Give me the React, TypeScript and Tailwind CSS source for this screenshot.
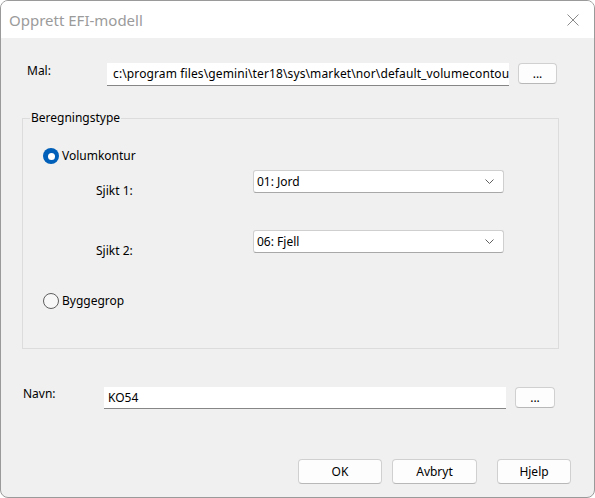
import React from 'react'

const font = { fontFamily: '"Segoe UI", "Noto Sans", sans-serif' }

function Radio({ checked, label }: { checked?: boolean; label: string }) {
  return (
    <div className="flex items-center h-[16px]">
      {checked ? (
        <div className="w-[16px] h-[16px] rounded-full bg-[#005fb8] flex items-center justify-center">
          <div className="w-[7px] h-[7px] rounded-full bg-white" />
        </div>
      ) : (
        <div className="w-[16px] h-[16px] rounded-full border border-[#5e5e5e] bg-[#f7f7f7]" />
      )}
      <span className="ml-[3px] leading-[16px]">{label}</span>
    </div>
  )
}

function Combo({ value }: { value: string }) {
  return (
    <div className="w-[251px] h-[23px] bg-white border border-[#cfcfcf] border-b-[#a8a8a8] rounded-[3px] flex items-center justify-between pl-[3px] pr-[9px]">
      <span className="leading-[16px]">{value}</span>
      <svg width="9" height="5" viewBox="0 0 9 5" className="text-[#606060]">
        <polyline points="0.5,0.5 4.5,4.5 8.5,0.5" fill="none" stroke="currentColor" strokeWidth="1" />
      </svg>
    </div>
  )
}

function Btn({ children, w }: { children: React.ReactNode; w: string }) {
  return (
    <button className={`${w} h-[25px] bg-[#fdfdfd] border border-[#d0d0d0] border-b-[#b8b8b8] rounded-[4px] text-black leading-[16px]`}>
      {children}
    </button>
  )
}

export default function App() {
  return (
    <div className="w-[595px] h-[498px] bg-white" style={font}>
      <div className="w-[595px] h-[498px] border border-[#9a9a9a] rounded-[8px] overflow-hidden bg-[#f0f0f0] flex flex-col text-[12px] text-black">
        {/* Title bar */}
        <div className="h-[37px] bg-white flex items-center justify-between pl-[8px] pr-[15px] shrink-0">
          <span className="text-[15px] text-[#9b9b9b] leading-[20px] mt-[1px]">Opprett EFI-modell</span>
          <svg width="12" height="12" viewBox="0 0 12 12">
            <path d="M0.5 0.5 L11.5 11.5 M11.5 0.5 L0.5 11.5" stroke="#8a8a8a" strokeWidth="1" />
          </svg>
        </div>

        {/* Mal */}
        <div className="flex items-start mt-[25px] pl-[26px]">
          <span className="w-[80px] leading-[16px]">Mal:</span>
          <div className="w-[402px] h-[23px] bg-white border-b border-[#868686] overflow-hidden whitespace-nowrap pl-[6px] flex items-center">
            <span className="leading-[16px] tracking-[0.12px]">c:\program files\gemini\ter18\sys\market\nor\default_volumecontour</span>
          </div>
          <div className="ml-[9px]">
            <button className="w-[39px] h-[21px] bg-[#fdfdfd] border border-[#d0d0d0] border-b-[#b8b8b8] rounded-[4px] leading-[12px]">...</button>
          </div>
        </div>

        {/* Beregningstype */}
        <div className="relative ml-[21px] mt-[32px] w-[537px] h-[231px] border border-[#dcdcdc] pl-[20px] pt-[29px]">
          <span className="absolute left-[7px] -top-[9px] px-[1px] bg-[#f0f0f0] leading-[16px]">Beregningstype</span>
          <Radio checked label="Volumkontur" />
          <div className="flex items-start mt-[6px] pl-[53px]">
            <span className="w-[157px] mt-[13px] leading-[16px]">Sjikt 1:</span>
            <Combo value="01: Jord" />
          </div>
          <div className="flex items-start mt-[31px] pl-[53px]">
            <span className="w-[157px] mt-[13px] leading-[16px]">Sjikt 2:</span>
            <Combo value="06: Fjell" />
          </div>
          <div className="mt-[34px]">
            <Radio label="Byggegrop" />
          </div>
        </div>

        {/* Navn */}
        <div className="flex items-start mt-[38px] pl-[22px]">
          <span className="w-[81px] leading-[16px] -mt-[1px]">Navn:</span>
          <div className="w-[402px] h-[22px] bg-white border-b border-[#868686] pl-[4px] flex items-center">
            <span className="leading-[16px]">KO54</span>
          </div>
          <div className="ml-[9px]">
            <button className="w-[40px] h-[21px] bg-[#fdfdfd] border border-[#d0d0d0] border-b-[#b8b8b8] rounded-[4px] leading-[12px]">...</button>
          </div>
        </div>

        {/* Buttons */}
        <div className="flex justify-end mt-[50px] pr-[23px]">
          <Btn w="w-[84px]">OK</Btn>
          <div className="ml-[10px]">
            <Btn w="w-[85px]">Avbryt</Btn>
          </div>
          <div className="ml-[20px]">
            <Btn w="w-[74px]">Hjelp</Btn>
          </div>
        </div>
      </div>
    </div>
  )
}
